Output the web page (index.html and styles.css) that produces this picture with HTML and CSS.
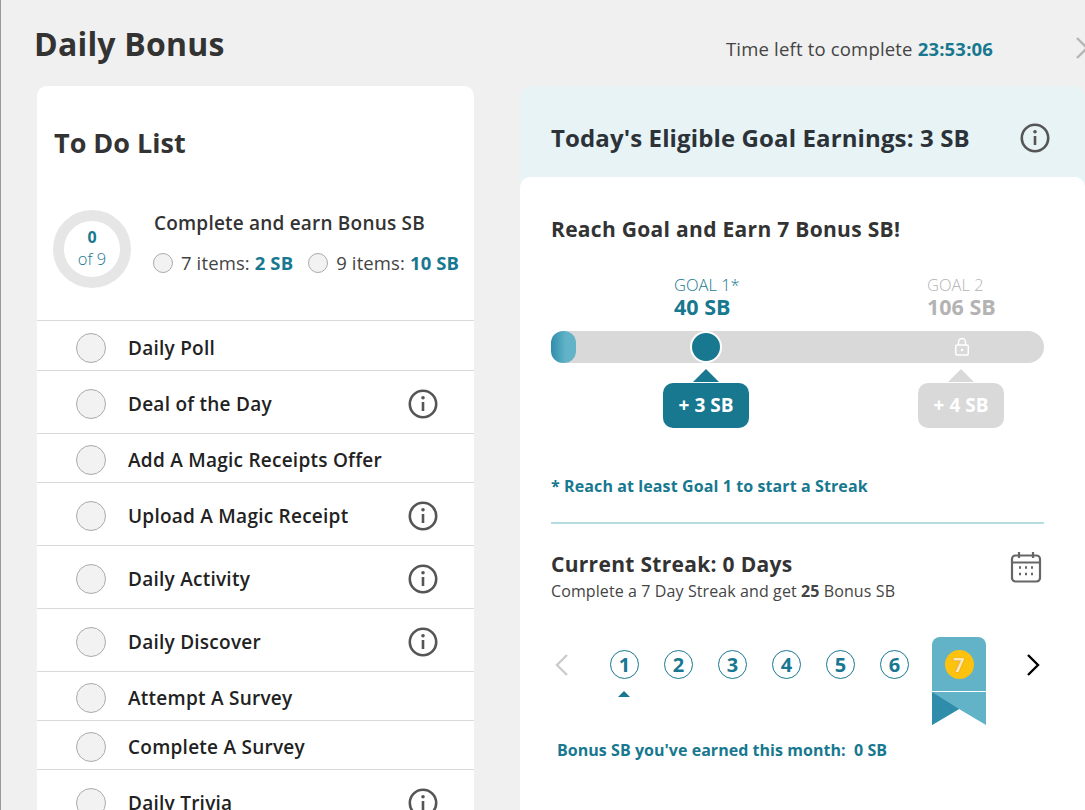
FILE: index.html
```html
<!DOCTYPE html>
<html>
  <head>
    <meta charset="UTF-8" />
    <title>Daily Bonus</title>
    <link rel="stylesheet" href="styles.css">
  </head>
  <body>
    <div class="modal">
      <div class="header">
        <h1>Daily Bonus</h1>
        <div class="timer">Time left to complete <b>23:53:06</b></div>
        <svg class="close" width="16" height="24" viewBox="0 0 16 24">
          <path d="M1 2 L11 12 L1 22 M21 2 L11 12 L21 22" fill="none" stroke="#b5b5b5" stroke-width="2.4" />
        </svg>
      </div>

      <div class="columns">
        <div class="todo">
          <h2>To Do List</h2>
          <div class="summary">
            <div class="ring">
              <b>0</b>
              <span>of 9</span>
            </div>
            <div class="summary-text">
              <div class="summary-title">Complete and earn Bonus SB</div>
              <div class="tiers">
                <span class="radio small"></span>
                <span class="tier">7 items: <b>2 SB</b></span>
                <span class="radio small second"></span>
                <span class="tier">9 items: <b>10 SB</b></span>
              </div>
            </div>
          </div>

          <div class="task"><span class="radio"></span><span class="task-name">Daily Poll</span></div>
          <div class="task tall">
            <span class="radio"></span><span class="task-name">Deal of the Day</span>
            <svg class="info" viewBox="0 0 30 30"><circle cx="15" cy="15" r="13.2" /><circle class="dot" cx="15" cy="8.8" r="1.8" /><path d="M15 13 V22" /></svg>
          </div>
          <div class="task"><span class="radio"></span><span class="task-name">Add A Magic Receipts Offer</span></div>
          <div class="task tall">
            <span class="radio"></span><span class="task-name">Upload A Magic Receipt</span>
            <svg class="info" viewBox="0 0 30 30"><circle cx="15" cy="15" r="13.2" /><circle class="dot" cx="15" cy="8.8" r="1.8" /><path d="M15 13 V22" /></svg>
          </div>
          <div class="task tall">
            <span class="radio"></span><span class="task-name">Daily Activity</span>
            <svg class="info" viewBox="0 0 30 30"><circle cx="15" cy="15" r="13.2" /><circle class="dot" cx="15" cy="8.8" r="1.8" /><path d="M15 13 V22" /></svg>
          </div>
          <div class="task tall">
            <span class="radio"></span><span class="task-name">Daily Discover</span>
            <svg class="info" viewBox="0 0 30 30"><circle cx="15" cy="15" r="13.2" /><circle class="dot" cx="15" cy="8.8" r="1.8" /><path d="M15 13 V22" /></svg>
          </div>
          <div class="task"><span class="radio"></span><span class="task-name">Attempt A Survey</span></div>
          <div class="task"><span class="radio"></span><span class="task-name">Complete A Survey</span></div>
          <div class="task tall">
            <span class="radio"></span><span class="task-name">Daily Trivia</span>
            <svg class="info" viewBox="0 0 30 30"><circle cx="15" cy="15" r="13.2" /><circle class="dot" cx="15" cy="8.8" r="1.8" /><path d="M15 13 V22" /></svg>
          </div>
        </div>

        <div class="goals">
          <div class="goals-head">
            <h2>Today's Eligible Goal Earnings: 3 SB</h2>
            <svg class="info" viewBox="0 0 30 30"><circle cx="15" cy="15" r="13.2" /><circle class="dot" cx="15" cy="8.8" r="1.8" /><path d="M15 13 V22" /></svg>
          </div>

          <div class="goals-card">
            <h3>Reach Goal and Earn 7 Bonus SB!</h3>

            <div class="goal-labels">
              <div class="goal-label active">
                <span>GOAL 1*</span>
                <b>40 SB</b>
              </div>
              <div class="goal-label">
                <span>GOAL 2</span>
                <b>106 SB</b>
              </div>
            </div>

            <div class="bar">
              <div class="bar-fill"></div>
              <div class="bar-marker"></div>
              <svg class="lock" width="16" height="20" viewBox="0 0 16 20">
                <path d="M4.5 8 V5 a3.5 3.5 0 0 1 7 0 V8" fill="none" stroke="#fff" stroke-width="1.5" />
                <rect x="1.7" y="8" width="12.6" height="10" rx="1.5" fill="none" stroke="#fff" stroke-width="1.5" />
                <circle cx="8" cy="13" r="1.3" fill="#fff" />
              </svg>
            </div>

            <div class="rewards">
              <div class="reward active">+ 3 SB</div>
              <div class="reward">+ 4 SB</div>
            </div>

            <div class="goal-note">* Reach at least Goal 1 to start a Streak</div>

            <div class="streak">
              <div class="streak-head">
                <div>
                  <h3>Current Streak: 0 Days</h3>
                  <p>Complete a 7 Day Streak and get <b>25</b> Bonus SB</p>
                </div>
                <svg class="calendar" width="32" height="32" viewBox="0 0 32 32" fill="none" stroke="#666" stroke-width="2.2">
                  <rect x="2" y="4.5" width="28" height="26" rx="3.5" />
                  <path d="M2 11.5 H30 M9 1 V7 M23 1 V7" />
                  <path class="calendar-dots" d="M9 16.5 h2 M15 16.5 h2 M21 16.5 h2 M9 23 h2 M15 23 h2 M21 23 h2" stroke-width="2.4" />
                </svg>
              </div>

              <div class="days">
                <svg class="arrow" width="16" height="24" viewBox="0 0 16 24"><path d="M13 2 L3 12 L13 22" fill="none" stroke="#ccc" stroke-width="2.4" /></svg>
                <div class="day current">1</div>
                <div class="day">2</div>
                <div class="day">3</div>
                <div class="day">4</div>
                <div class="day">5</div>
                <div class="day">6</div>
                <div class="ribbon">
                  <div class="ribbon-top"><span class="day-gold">7</span></div>
                  <svg width="54" height="33" viewBox="0 0 54 33">
                    <path d="M0 0 H54 V33 L27 17 L0 33 Z" fill="#62b3c8" />
                    <path d="M0 0 L27 17 L0 33 Z" fill="#2f8dab" />
                  </svg>
                </div>
                <svg class="arrow next" width="16" height="24" viewBox="0 0 16 24"><path d="M3 2 L13 12 L3 22" fill="none" stroke="#000" stroke-width="2.4" /></svg>
              </div>

              <div class="earned">Bonus SB you've earned this month:&nbsp; 0 SB</div>
            </div>
          </div>
        </div>
      </div>
    </div>
  </body>
</html>
```

FILE: styles.css
```css
* {
  margin: 0;
  padding: 0;
  box-sizing: border-box;
}

html,
body {
  height: 100%;
  overflow: hidden;
}

body {
  font-family: "Open Sans", "Liberation Sans", sans-serif;
  background: #f0f0f0;
  color: #333;
}

.modal {
  height: 810px;
  border-left: 1px solid #999;
  overflow: hidden;
}

.header {
  display: flex;
  align-items: center;
  height: 86px;
  padding: 1px 0 0 33px;
}

.header h1 {
  font-size: 32px;
  font-weight: 700;
  letter-spacing: 0.2px;
  width: 692px;
  flex-shrink: 0;
}

.timer {
  font-size: 18.5px;
  font-weight: 400;
  letter-spacing: 0.18px;
  color: #444;
  margin-top: 9px;
  width: 350px;
  flex-shrink: 0;
  white-space: nowrap;
}

.timer b {
  color: #17788f;
}

.close {
  margin-top: 8px;
  flex-shrink: 0;
}

.columns {
  display: flex;
  align-items: flex-start;
  padding-left: 36px;
}

.todo {
  width: 437px;
  height: 760px;
  background: white;
  border-radius: 10px 10px 0 0;
  flex-shrink: 0;
}

.todo h2 {
  font-size: 27px;
  font-weight: 700;
  padding: 38px 0 0 17px;
  height: 124px;
}

.summary {
  display: flex;
  height: 110px;
  padding-left: 16px;
}

.ring {
  display: flex;
  flex-direction: column;
  align-items: center;
  justify-content: center;
  width: 78px;
  height: 78px;
  padding-bottom: 3px;
  border: 11px solid #e6e6e6;
  border-radius: 50%;
  color: #17788f;
  font-size: 16.5px;
  line-height: 22px;
  flex-shrink: 0;
}

.ring b {
  font-size: 16px;
}

.ring span {
  font-weight: 300;
}

.summary-text {
  padding-left: 23px;
}

.summary-title {
  font-size: 19px;
  font-weight: 600;
  letter-spacing: 0.2px;
  line-height: 26px;
}

.tiers {
  display: flex;
  align-items: center;
  margin-top: 14px;
  margin-left: -1px;
  font-size: 18.5px;
  letter-spacing: 0.12px;
  line-height: 26px;
  white-space: nowrap;
}

.tier {
  font-weight: 400;
  color: #444;
}

.tier b {
  color: #17788f;
}

.radio {
  display: block;
  width: 30px;
  height: 30px;
  border: 1px solid #aaa;
  border-radius: 50%;
  background: #f2f2f2;
  flex-shrink: 0;
}

.radio.small {
  width: 20px;
  height: 20px;
  margin-right: 8px;
}

.radio.second {
  margin-left: 15px;
}

.task {
  display: flex;
  align-items: center;
  height: 49px;
  padding: 4px 0 0 39px;
  border-top: 1px solid #d9d9d9;
}

.summary + .task {
  height: 50px;
}

.task.tall {
  height: 63px;
}

.task-name {
  font-size: 19px;
  font-weight: 600;
  letter-spacing: 0.25px;
  color: #222;
  margin-left: 22px;
}

.info {
  width: 30px;
  height: 30px;
  fill: none;
  stroke: #555;
  stroke-width: 2.6;
  flex-shrink: 0;
}

.info .dot {
  fill: #555;
  stroke: none;
}

.task .info {
  margin-left: auto;
  margin-right: 36px;
}

.goals {
  width: 565px;
  margin-left: 46px;
  background: #e8f3f6;
  border-radius: 10px 10px 0 0;
  flex-shrink: 0;
}

.goals-head {
  display: flex;
  align-items: center;
  justify-content: space-between;
  height: 91px;
  padding: 12px 35px 0 31px;
}

.goals-head h2 {
  font-size: 24px;
  font-weight: 700;
  letter-spacing: 0.12px;
  color: #2b3238;
}

.goals-card {
  height: 640px;
  padding: 36px 41px 0 31px;
  background: white;
  border-radius: 10px 10px 0 0;
}

.goals-card h3 {
  font-size: 21px;
  font-weight: 700;
  letter-spacing: 0.3px;
  line-height: 32px;
}

.goal-labels {
  display: flex;
  margin-top: 29px;
  padding-left: 123px;
}

.goal-label {
  width: 253px;
  flex-shrink: 0;
  color: #b3b3b3;
}

.goal-label span,
.goal-label b {
  display: block;
}

.goal-label span {
  font-size: 16.5px;
  font-weight: 300;
  line-height: 22px;
}

.goal-label b {
  font-size: 21.5px;
  line-height: 22px;
}

.goal-label.active {
  color: #17788f;
}

.bar {
  display: flex;
  align-items: center;
  height: 32px;
  margin-top: 13px;
  background: #d9d9d9;
  border-radius: 16px;
}

.bar-fill {
  width: 25px;
  height: 32px;
  border-radius: 12px;
  background: linear-gradient(90deg, #2f8dab 0%, #62b3c8 60%, #62b3c8 100%);
}

.bar-marker {
  width: 32px;
  height: 32px;
  margin-left: 114px;
  background: #17788f;
  border: 2px solid white;
  border-radius: 50%;
}

.lock {
  margin-left: 232px;
}

.rewards {
  display: flex;
  margin-top: 20px;
  padding-left: 112px;
}

.reward {
  position: relative;
  width: 86px;
  height: 45px;
  margin-right: 169px;
  flex-shrink: 0;
  background: #d9d9d9;
  border-radius: 10px;
  color: white;
  font-size: 19px;
  font-weight: 700;
  line-height: 45px;
  text-align: center;
  white-space: nowrap;
}

.reward::before {
  content: "";
  position: absolute;
  top: -14px;
  left: 30px;
  border-left: 13px solid transparent;
  border-right: 13px solid transparent;
  border-bottom: 13px solid #d9d9d9;
}

.reward.active {
  background: #17788f;
}

.reward.active::before {
  border-bottom-color: #17788f;
}

.goal-note {
  margin-top: 46px;
  font-size: 16px;
  font-weight: 700;
  letter-spacing: 0.1px;
  line-height: 24px;
  color: #17788f;
}

.streak {
  margin-top: 24px;
  border-top: 2px solid #b5dde2;
}

.streak-head {
  display: flex;
  justify-content: space-between;
  padding-top: 24px;
}

.streak-head h3 {
  line-height: 32px;
}

.streak-head p {
  font-size: 16px;
  letter-spacing: 0.1px;
  line-height: 22px;
  color: #444;
}

.calendar {
  margin: 3px 2px 0 0;
}

.days {
  display: flex;
  align-items: flex-start;
  margin-top: 35px;
}

.arrow {
  margin: 16px 40px 0 3px;
  flex-shrink: 0;
}

.arrow.next {
  margin: 16px 0 0 39px;
}

.day {
  position: relative;
  width: 29px;
  height: 29px;
  margin: 13px 25px 0 0;
  border: 1px solid #17788f;
  border-radius: 50%;
  color: #17788f;
  font-size: 20px;
  font-weight: 700;
  line-height: 27px;
  text-align: center;
  flex-shrink: 0;
}

.day.current::after {
  content: "";
  position: absolute;
  top: 40px;
  left: 7px;
  border-left: 6px solid transparent;
  border-right: 6px solid transparent;
  border-bottom: 6px solid #17788f;
}

.ribbon {
  width: 54px;
  height: 87px;
  flex-shrink: 0;
  margin-left: -2px;
}

.ribbon svg {
  display: block;
}

.ribbon-top {
  display: flex;
  align-items: center;
  justify-content: center;
  height: 54px;
  margin-bottom: 1px;
  background: #62b3c8;
  border-radius: 8px 8px 0 0;
}

.day-gold {
  width: 29px;
  height: 29px;
  background: #fdc20e;
  border-radius: 50%;
  color: #fbe9b8;
  font-size: 20px;
  font-weight: 700;
  line-height: 29px;
  text-align: center;
  text-shadow: 0 0 1px #b5651d;
}

.earned {
  margin: 14px 0 0 6px;
  font-size: 16px;
  font-weight: 700;
  letter-spacing: 0.04px;
  line-height: 24px;
  color: #17788f;
}
```
